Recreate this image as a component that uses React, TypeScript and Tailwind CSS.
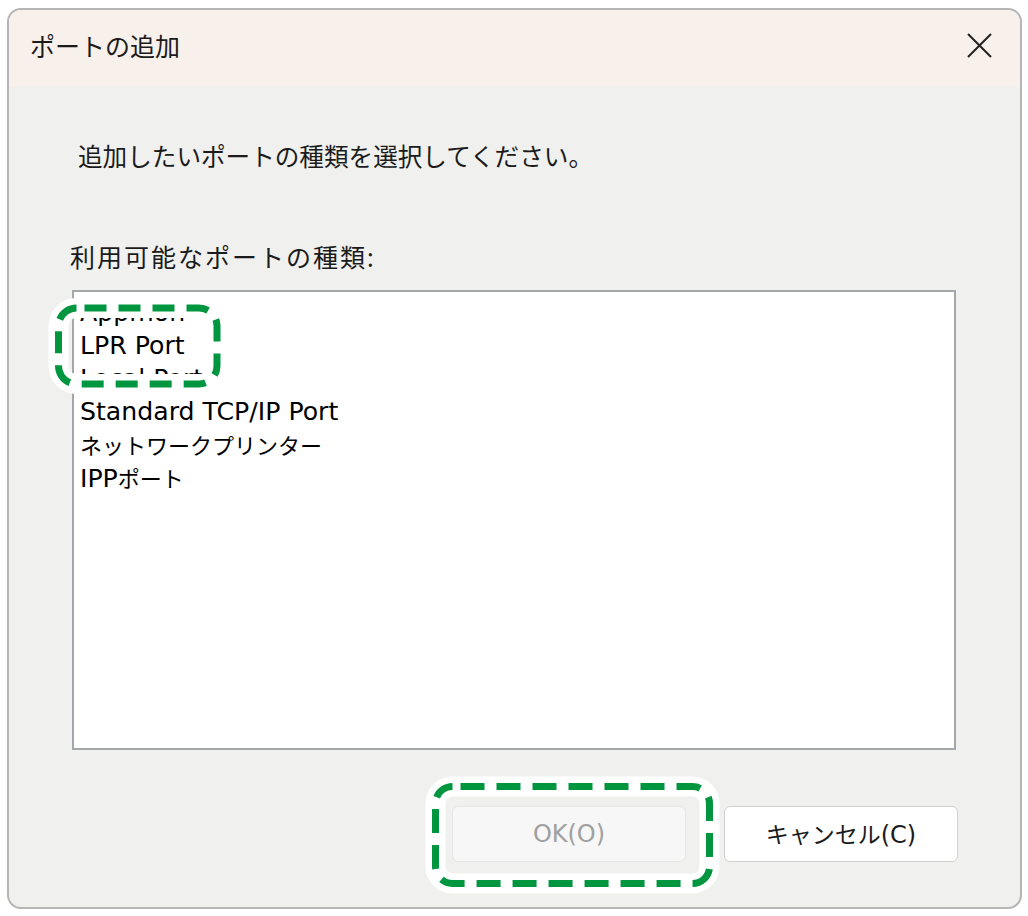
import React from 'react';

const FONT = { fontFamily: '"Noto Sans", "Noto Sans CJK JP", sans-serif' };
const LATIN = { fontFamily: '"DejaVu Sans", "Noto Sans CJK JP", sans-serif' };
const JP = { fontFamily: '"Noto Sans CJK JP", sans-serif' };

// each item split into latin / japanese runs so the widths follow the screenshot
const ports: [string, string][] = [
  ['Appmon', ''],
  ['LPR Port', ''],
  ['Local Port', ''],
  ['Standard TCP/IP Port', ''],
  ['', 'ネットワークプリンター'],
  ['IPP', 'ポート'],
];

// dashed green callouts with a white halo, drawn over the dialog
const Callouts = () => (
  <svg className="pointer-events-none absolute left-0 top-0" width="1028" height="916" viewBox="0 0 1028 916">
    <g fill="none">
      <rect x="58.5" y="308" width="158.5" height="76" rx="18" stroke="#ffffff" strokeWidth="20" />
      <rect x="58.5" y="308" width="158.5" height="76" rx="18" stroke="#00963f" strokeWidth="7" strokeDasharray="22 12" strokeDashoffset="-8" />
      <rect x="435.5" y="786.5" width="274" height="97" rx="17" stroke="#ffffff" strokeWidth="20" />
      <rect x="435.5" y="786.5" width="274" height="97" rx="17" stroke="#00963f" strokeWidth="7" strokeDasharray="24 12" strokeDashoffset="-8" />
    </g>
  </svg>
);

export default function App() {
  return (
    <div className="relative h-[916px] w-[1028px] overflow-hidden bg-white pl-[7px] pt-[8px]" style={FONT}>
      <div className="flex h-[901px] w-[1015px] flex-col overflow-hidden rounded-[14px] border-2 border-[#b5b5b5] bg-[#f0f0ef]">
        <div className="flex h-[77px] shrink-0 items-center justify-between bg-[#f8f0ea] pb-[6px] pl-[21px] pr-[28px]">
          <span className="text-[25px] leading-[32px] text-[#1b1b1b]">ポートの追加</span>
          <svg width="25" height="25" viewBox="0 0 25 25">
            <path d="M1 1 L24 24 M24 1 L1 24" stroke="#222" strokeWidth="2" />
          </svg>
        </div>
        <div className="flex flex-1 flex-col pl-[61px] pr-[62px]">
          <p className="ml-[8px] mt-[54px] text-[24.6px] leading-[32px] text-[#1b1b1b]">追加したいポートの種類を選択してください。</p>
          <p className="mt-[68px] text-[25px] leading-[32px] tracking-[2px] text-[#1b1b1b]">利用可能なポートの種類:</p>
          <div className="ml-[2px] mt-[17px] h-[460px] w-[884px] overflow-hidden border-2 border-[#a3a6aa] bg-white pl-[6px] pt-[4px]">
            {ports.map(([latin, jp]) => (
              <div key={latin + jp} className="h-[33px] whitespace-nowrap leading-[33px] text-black">
                {latin && <span className="text-[25.2px]" style={LATIN}>{latin}</span>}
                {jp && <span className="text-[22px]" style={JP}>{jp}</span>}
              </div>
            ))}
          </div>
          <div className="mt-[56px] flex justify-end gap-[38px]">
            <button className="h-[56px] w-[234px] rounded-[6px] border border-[#e6e6e6] bg-[#f7f7f7] text-[24px] text-[#a0a0a0]" style={LATIN}>OK(O)</button>
            <button className="h-[56px] w-[234px] rounded-[6px] border border-[#d0d0d0] bg-white text-[#1b1b1b]">
              <span className="text-[23px]" style={JP}>キャンセル</span>
              <span className="text-[24px]" style={LATIN}>(C)</span>
            </button>
          </div>
        </div>
      </div>
      <Callouts />
    </div>
  );
}
